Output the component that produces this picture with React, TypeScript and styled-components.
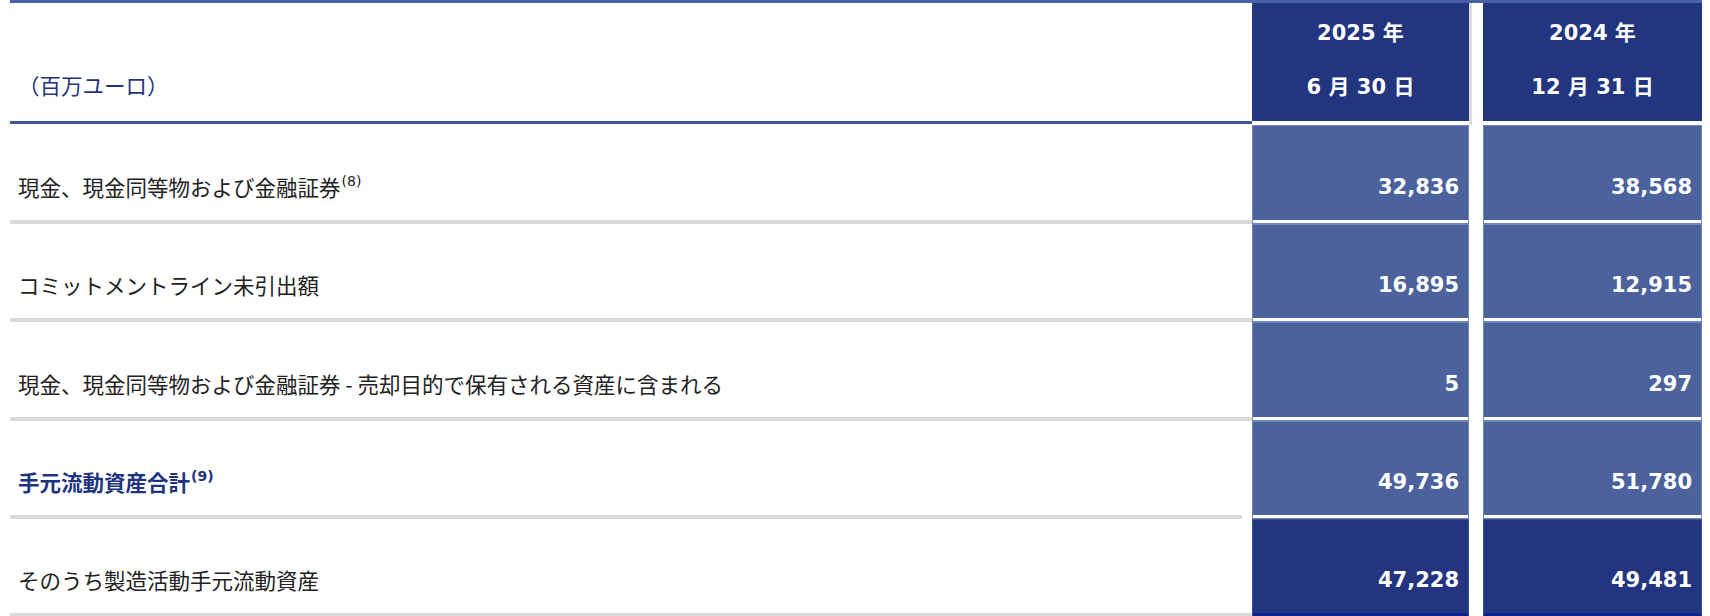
import React from "react";
import styled, { createGlobalStyle } from "styled-components";

const Global = createGlobalStyle`
  html, body { margin: 0; padding: 0; background: #ffffff; }
  body { font-family: "DejaVu Sans", "Noto Sans CJK JP", sans-serif; }
`;

const Page = styled.div`
  padding-left: 10px;
  width: 1692px;
`;

const Grid = styled.div`
  display: grid;
  grid-template-columns: 1242px 217px 14px 219px;
  border-top: 3px solid #4a62a3;
`;

const HeadLabel = styled.div`
  border-bottom: 3px solid #3f5597;
  display: flex;
  align-items: flex-end;
  padding: 0 0 24px 8px;
  box-sizing: content-box;
  height: 94px;
  font-family: "Noto Sans CJK JP", sans-serif;
  font-size: 21.5px;
  line-height: 25px;
  color: #1f3480;
`;

const HeadCell = styled.div`
  background: #22357f;
  border-bottom: 4px solid #ffffff;
  height: 122px;
  display: flex;
  flex-direction: column;
  align-items: center;
  padding-top: 18px;
  box-sizing: border-box;
  gap: 29px;
  color: #ffffff;
  font-weight: bold;
  font-size: 21px;
  line-height: 25px;
`;

const Gap = styled.div<{ $head?: boolean }>`
  background: #ffffff;
  border-left: ${(p) => (p.$head ? "3px solid #dcdcdc" : "0")};
`;

const Label = styled.div<{ $bold?: boolean; $h: number; $short?: boolean }>`
  display: flex;
  align-items: flex-end;
  padding: 0 0 21px 8px;
  box-sizing: content-box;
  height: ${(p) => p.$h - 21}px;
  font-family: "Noto Sans CJK JP", sans-serif;
  font-size: 21.5px;
  line-height: 25px;
  color: ${(p) => (p.$bold ? "#1f3480" : "#222222")};
  font-weight: ${(p) => (p.$bold ? 700 : 400)};
  border-bottom: 4px solid #d9d9d9;
  margin-right: ${(p) => (p.$short ? "10px" : "0")};
`;

const Sup = styled.sup`
  font-family: "DejaVu Sans", sans-serif;
  font-size: 14px;
  line-height: 0;
  vertical-align: 10px;
  margin-left: 1px;
  font-weight: inherit;
`;

const Value = styled.div<{ $dark?: boolean; $h: number; $last?: boolean }>`
  background: ${(p) => (p.$dark ? "#233580" : "#4c629c")};
  outline: 1px solid ${(p) => (p.$dark ? "#3a4c92" : "#7186bb")};
  outline-offset: -1px;
  border-bottom: 4px solid ${(p) => (p.$last ? "#0d2191" : "#ffffff")};
  display: flex;
  align-items: flex-end;
  justify-content: flex-end;
  padding: 0 10px 20px 0;
  box-sizing: content-box;
  height: ${(p) => p.$h - 20}px;
  color: #ffffff;
  font-family: "DejaVu Sans", sans-serif;
  font-weight: bold;
  font-size: 21px;
  line-height: 25px;
`;

type Row = {
  label: string;
  sup?: string;
  a: string;
  b: string;
  bold?: boolean;
  dark?: boolean;
  h: number;
  short?: boolean;
};

const rows: Row[] = [
  { label: "現金、現金同等物および金融証券", sup: "(8)", a: "32,836", b: "38,568", h: 95 },
  { label: "コミットメントライン未引出額", a: "16,895", b: "12,915", h: 94 },
  {
    label: "現金、現金同等物および金融証券 - 売却目的で保有される資産に含まれる",
    a: "5",
    b: "297",
    h: 95,
  },
  { label: "手元流動資産合計", sup: "(9)", a: "49,736", b: "51,780", bold: true, h: 94, short: true },
  { label: "そのうち製造活動手元流動資産", a: "47,228", b: "49,481", dark: true, h: 94 },
];

export default function App() {
  return (
    <>
      <Global />
      <Page>
        <Grid>
          <HeadLabel>（百万ユーロ）</HeadLabel>
          <HeadCell>
            <span>2025 年</span>
            <span>6 月 30 日</span>
          </HeadCell>
          <Gap $head />
          <HeadCell>
            <span>2024 年</span>
            <span>12 月 31 日</span>
          </HeadCell>
          {rows.map((r, i) => (
            <React.Fragment key={i}>
              <Label $bold={r.bold} $h={r.h} $short={r.short}>
                <span>
                  {r.label}
                  {r.sup && <Sup>{r.sup}</Sup>}
                </span>
              </Label>
              <Value $dark={r.dark} $h={r.h} $last={i === rows.length - 1}>
                {r.a}
              </Value>
              <Gap />
              <Value $dark={r.dark} $h={r.h} $last={i === rows.length - 1}>
                {r.b}
              </Value>
            </React.Fragment>
          ))}
        </Grid>
      </Page>
    </>
  );
}
